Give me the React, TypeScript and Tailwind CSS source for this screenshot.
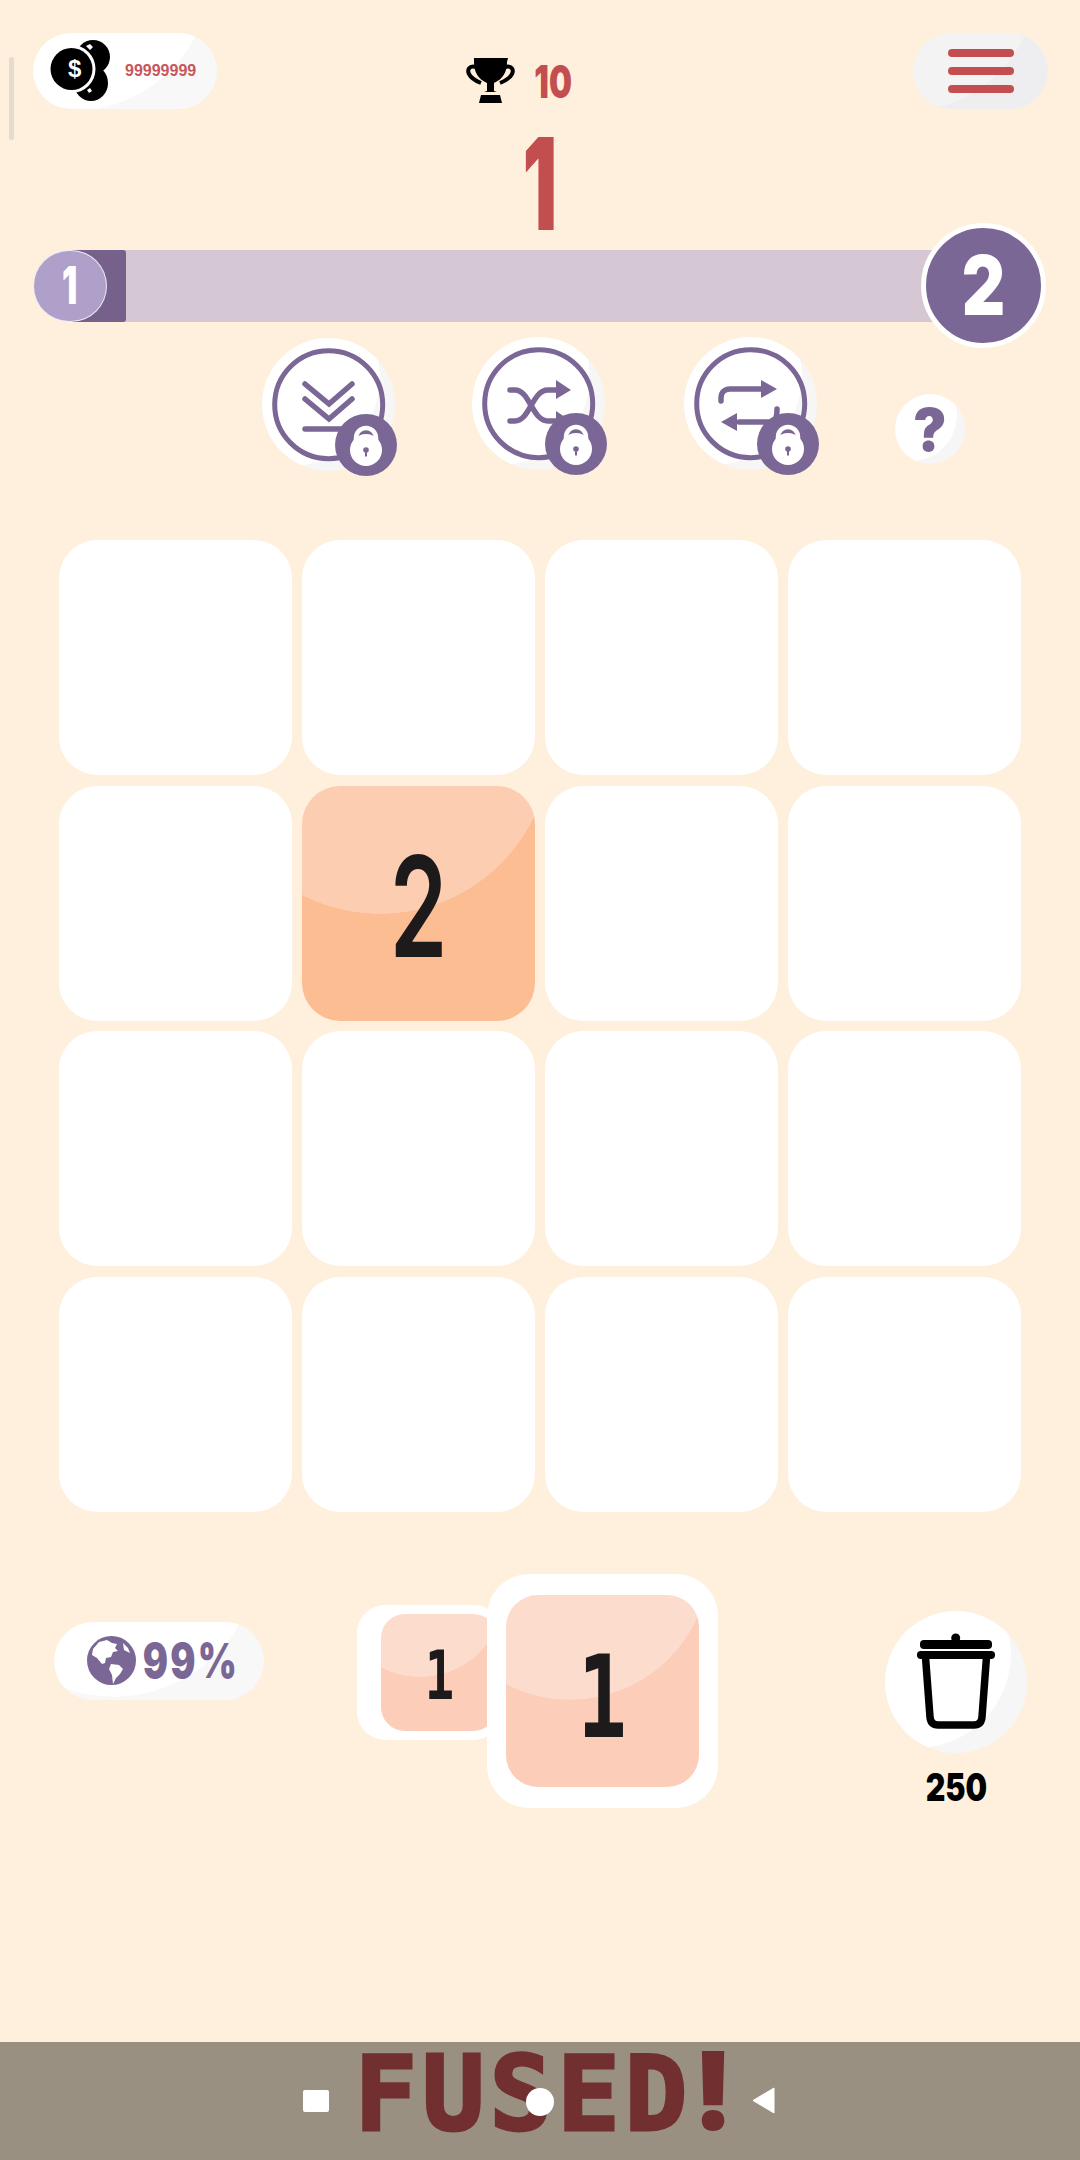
import React from 'react';

const PURPLE = '#7b6795';
const heavy = "font-['Inter',sans-serif] font-black";
const mono = "font-['DejaVu_Sans_Mono',monospace] font-bold";

const Lock = () => (
  <svg viewBox="0 0 62 62" className="absolute left-[73px] top-[76px] h-[62px] w-[62px]">
    <circle cx="31" cy="31" r="31" fill={PURPLE} />
    <path d="M21 31v-7a10 10 0 0 1 20 0v7" fill="none" stroke="#fff" strokeWidth="4.5" />
    <circle cx="31" cy="36" r="16" fill="#fff" />
    <circle cx="31" cy="36" r="2.8" fill={PURPLE} />
    <rect x="30" y="36" width="2" height="6.5" fill={PURPLE} />
  </svg>
);

const PowerUp = ({ children }: { children: React.ReactNode }) => (
  <div className="relative h-[133px] w-[133px] rounded-full bg-[radial-gradient(circle_88px_at_30px_40px,#ffffff_99.5%,#f6f6f7_100%)]">
    <svg viewBox="0 0 133 133" className="h-[133px] w-[133px]" fill="none" stroke={PURPLE} strokeWidth="5.5" strokeLinecap="round" strokeLinejoin="miter">
      <circle cx="66.7" cy="66.7" r="54" strokeWidth="5" />
      {children}
    </svg>
    <Lock />
  </div>
);

const Cell = ({ value }: { value?: string }) =>
  value ? (
    <div className="flex h-[235px] items-center justify-center rounded-[38px] bg-[radial-gradient(circle_171px_at_78px_-43px,#fdcdb2_99.7%,#fdbd92_100%)] pt-[6px]">
      <span className="scale-x-[0.66] font-['Inter',sans-serif] text-[140px] font-semibold leading-none text-[#1c1a1b]">{value}</span>
    </div>
  ) : (
    <div className="h-[235px] rounded-[38px] bg-white" />
  );

export default function App() {
  return (
    <div className="relative flex h-[2160px] w-[1080px] flex-col bg-[#fef0dc] font-['Liberation_Sans',sans-serif]">
      {/* scrollbar */}
      <div className="absolute left-[9px] top-[57px] h-[83px] w-[5px] rounded-sm bg-[#e4ddcf]" />

      {/* header */}
      <div className="mt-[33px] flex h-[76px] items-start pl-[33px] pr-[32px]">
        <div className="relative flex h-[76px] w-[184px] items-center rounded-full bg-[radial-gradient(circle_138px_at_40px_-60px,#ffffff_99.5%,#f8f8f9_100%)] pl-[92px]">
          <svg viewBox="0 0 62 66" className="absolute left-[17px] top-[3px] h-[66px] w-[62px]">
            <ellipse cx="43" cy="21" rx="17" ry="17" fill="#000" />
            <ellipse cx="41" cy="47" rx="17" ry="18" fill="#000" />
            <circle cx="21.5" cy="33" r="24" fill="#fff" />
            <circle cx="21.5" cy="33" r="21" fill="#000" />
            <path d="M36 10l4-2 3 3-3 3zM37 54l3-2 2 3-3 2z" fill="#fff" />
          </svg>
          <span className="absolute left-[35px] top-[22px] text-[24px] font-bold leading-[28px] text-white">$</span>
          <span className="text-[16px] font-bold leading-none text-[#c9565a]">99999999</span>
        </div>

        <div className="ml-[249px] mt-[24px] flex items-center gap-[19px]">
          <svg viewBox="0 0 49 45" className="h-[45px] w-[49px]">
            <path d="M8 0h34l-1 4c0 10-4 17-13 21v8l3 1H18l3-1v-8C12 21 8 14 8 4z" fill="#000" />
            <path d="M10 9C3 7 1 12 3 16c2 4 7 7 12 9M39 9c7-2 9 3 7 7-2 4-7 7-12 9" fill="none" stroke="#000" strokeWidth="4" />
            <path d="M15 37h19l2 8H13z" fill="#000" />
          </svg>
          <div className="flex w-[38px] justify-center pt-[2px]">
            <span className={`${heavy} scale-x-[0.72] text-[45px] leading-none text-[#c34e50]`}>10</span>
          </div>
        </div>

        <div className="ml-auto flex h-[76px] w-[135px] flex-col items-center justify-center gap-[10px] rounded-full bg-[radial-gradient(circle_128px_at_-5px_-50px,#f3f3f4_99.5%,#eeeef0_100%)]">
          <div className="h-[8px] w-[66px] rounded-full bg-[#c34e50]" />
          <div className="h-[8px] w-[66px] rounded-full bg-[#c34e50]" />
          <div className="h-[8px] w-[66px] rounded-full bg-[#c34e50]" />
        </div>
      </div>

      {/* score */}
      <div className="flex h-[141px] items-start justify-center">
        <span className={`${heavy} mt-[11px] scale-x-[0.6] text-[128px] leading-none text-[#c34e50]`}>1</span>
      </div>

      {/* level bar */}
      <div className="relative ml-[70px] flex h-[72px] w-[893px] bg-[#d6c7d4]">
        <div className="h-full w-[56px] rounded-[3px] bg-[#76608c]" />
        <div className="absolute left-[-37px] top-0 flex h-[72px] w-[74px] items-center justify-center rounded-full border border-white/80 bg-[#aea0c9]">
          <span className={`${heavy} scale-x-[0.65] text-[52px] leading-none text-white`}>1</span>
        </div>
        <div className="absolute left-[851px] top-[-27px] flex h-[125px] w-[125px] items-center justify-center rounded-full border-[5px] border-white bg-[#7b6795]">
          <span className={`${heavy} scale-x-[0.82] text-[82px] leading-none text-white`}>2</span>
        </div>
      </div>

      {/* power ups */}
      <div className="ml-[262px] mt-[16px] flex h-[135px] items-start gap-[78px]">
        <PowerUp>
          <path d="M43 46l24 20 23-20M43 61l24 20 23-20M43 91h38" />
        </PowerUp>
        <div className="-ml-[1px] -mt-[1px]">
          <PowerUp>
            <path d="M38 53h5c15 0 17 31 33 31h8M38 84h5c15 0 17-31 33-31h8" />
            <path d="M84 43l15 10-15 9zM84 74l15 10-15 9z" fill={PURPLE} stroke="none" />
          </PowerUp>
        </div>
        <div className="ml-[1px] -mt-[1px]">
          <PowerUp>
            <path d="M37 64v-3c0-6 4-9 9-9h32M55 85h32c4 0 6-4 6-13" />
            <path d="M77 43l16 9-16 9zM37 85l16-9v18z" fill={PURPLE} stroke="none" />
          </PowerUp>
        </div>
        <div className="mt-[56px] flex h-[70px] w-[70px] items-center justify-center rounded-full bg-[radial-gradient(circle_46px_at_16px_21px,#ffffff_99.5%,#f6f6f7_100%)]">
          <span className={`${heavy} scale-x-[0.95] text-[59px] leading-none text-[#7b6795]`}>?</span>
        </div>
      </div>

      {/* board */}
      <div className="ml-[59px] mt-[67px] grid w-[962px] grid-cols-4 gap-x-[10px] gap-y-[10.5px]">
        <Cell /><Cell /><Cell /><Cell />
        <Cell /><Cell value="2" /><Cell /><Cell />
        <Cell /><Cell /><Cell /><Cell />
        <Cell /><Cell /><Cell /><Cell />
      </div>

      {/* bottom controls */}
      <div className="mt-[62px] flex items-start">
        <div className="ml-[54px] mt-[48px] flex h-[78px] w-[210px] items-center gap-[9px] rounded-full bg-[radial-gradient(circle_145px_at_60px_-70px,#ffffff_99.5%,#f8f8f9_100%)] pl-[33px]">
          <svg viewBox="0 0 49 49" className="h-[49px] w-[49px] shrink-0">
            <circle cx="24.5" cy="24.5" r="24.5" fill={PURPLE} />
            <path d="M6 13l6-7 8-2 5 3 5 1-2 4 3 3-5 1-2 5-5 1-1 5-3 1-5-6-5-3z" fill="#fff" />
            <path d="M24 28l8 1 4 4-3 5-4 4-3 6-1-9-3-6z" fill="#fff" />
            <path d="M36 7l5 5 2 5-6-3z" fill="#fff" />
          </svg>
          <div className="flex w-[92px] justify-center">
            <span className={`${heavy} scale-x-[0.78] whitespace-nowrap text-[48px] leading-none tracking-[3px] text-[#7b6795]`}>99%</span>
          </div>
        </div>

        <div className="ml-[93px] mt-[31px] flex h-[135px] w-[145px] items-center rounded-[28px] bg-white pl-[24px]">
          <div className="flex h-[117px] w-[116px] items-center justify-center overflow-hidden rounded-[24px] bg-[radial-gradient(circle_85px_at_39px_-22px,#fcdccd_99.5%,#fccdb9_100%)] pt-[8px]">
            <span className={`${mono} scale-x-[0.72] text-[68px] leading-none text-[#1c1a1b]`}>1</span>
          </div>
        </div>

        <div className="z-10 -ml-[15px] flex h-[234px] w-[231px] items-center justify-center rounded-[42px] bg-white">
          <div className="flex h-[192px] w-[193px] items-center justify-center rounded-[32px] bg-[radial-gradient(circle_140px_at_64px_-35px,#fcdccd_99.5%,#fccdb9_100%)] pt-[14px]">
            <span className={`${mono} scale-x-[0.72] text-[114px] leading-none text-[#1c1a1b]`}>1</span>
          </div>
        </div>

        <div className="ml-[167px] mt-[37px] flex w-[142px] flex-col items-center">
          <div className="flex h-[142px] w-[142px] items-center justify-center rounded-full bg-[radial-gradient(circle_94px_at_32px_43px,#ffffff_99.5%,#f6f6f7_100%)]">
            <svg viewBox="0 0 78 97" className="h-[97px] w-[78px]">
              <circle cx="38.7" cy="5" r="4.5" fill="#000" />
              <rect x="3" y="7" width="72" height="9" rx="4" fill="#000" />
              <rect x="0" y="18" width="78" height="8" rx="3.7" fill="#000" />
              <path d="M8.5 24L13 84q.7 8 8 8h36q7.3 0 8-8l4.5-60" fill="none" stroke="#000" strokeWidth="7.5" />
            </svg>
          </div>
          <span className={`${heavy} mt-[15px] scale-x-[0.8] text-[38px] leading-none text-black`}>250</span>
        </div>
      </div>

      {/* navigation bar */}
      <div className="relative mt-auto flex h-[118px] items-start justify-center bg-[#9a9082]">
        <div className="ml-[8px] flex items-baseline whitespace-nowrap text-[#722f30]">
          <span className={`${mono} text-[104px] leading-[98px] tracking-[5px] [-webkit-text-stroke:3px_#722f30]`}>FUSED</span>
          <span className={`${heavy} text-[108px] leading-[98px]`}>!</span>
        </div>
        <div className="absolute left-[303px] top-[48px] h-[22px] w-[26px] rounded-[2px] bg-white" />
        <div className="absolute left-[526px] top-[46px] h-[28px] w-[28px] rounded-full bg-white" />
        <svg viewBox="0 0 23 27" className="absolute left-[752px] top-[45px] h-[27px] w-[23px]">
          <path d="M22 1v25L1 13.5z" fill="#fff" stroke="#fff" strokeLinejoin="round" />
        </svg>
      </div>
    </div>
  );
}
